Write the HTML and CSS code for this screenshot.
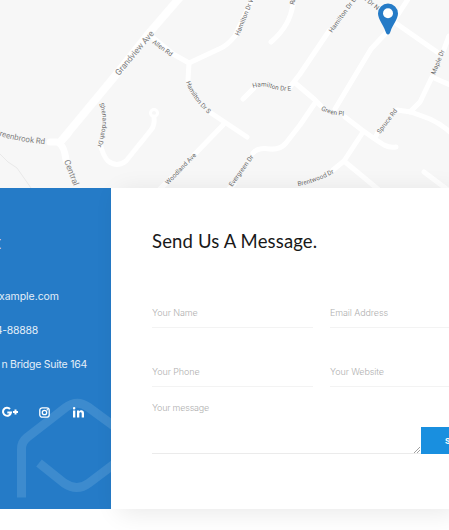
FILE: index.html
```html
<!DOCTYPE html>
<html lang="en">
<head>
<meta charset="utf-8">
<title>Contact</title>
<link rel="stylesheet" href="styles.css">
</head>
<body>
<svg class="map" viewBox="0 0 449 188" width="449" height="188">
  <defs>
    <path id="shen" d="M99 104Q107 119 97 147"/>
    <path id="green" d="M-6 134Q15 142 54 145"/>
    <path id="hams" d="M186 82Q192 100 212 117"/>
    <path id="hame" d="M253 88Q262 85 271 88Q280 92 296 90"/>
    <path id="gpl" d="M321 110Q332 116 350 116"/>
    <path id="brent" d="M298 186Q316 183 338 171"/>
  </defs>
  <path class="trail" d="M0 154L8 162L17 168L31 188"/>
  <g class="road">
    <path class="major" d="M182-5L150 32L115 76L62 140"/>
    <path class="mid" d="M50 142H57Q64 144 66 160M60 142L68 134"/>
    <path d="M100 143Q103 156 108 161Q117 168 126 161L151 130Q155 125 154 117"/>
    <circle class="loop" cx="154" cy="113" r="3.500"/>
    <path d="M151 36L173 54L189 63M189 63L219 49Q227 46 235 36L253-3M189 63L188 80M211 113L247 137M223 125L194 155M171 178L158 191"/>
    <path d="M293 4Q290 26 271 42M243 99L254 88M290 87L300 74L329 31M294 82L314 99L321 106M345 117L362 130Q376 140 384 145Q390 148 396 147"/>
    <path d="M315 103L300 125L286 143Q280 150 270 149Q258 147 253 153M234 184L228 190M335 109L371 49L386 33L410-4M397 24L437 52M449 36L443 52M432 77L420 102L410 112M432 77L450 85M397 110L411 112L430 119Q441 124 451 133M376 136L378 132M363 132L344 161L333 170M344 161L379 190M424 172L448 190"/>
  </g>
  <g class="names">
    <text class="big" transform="translate(119 76) rotate(-50)" textLength="55">Grandview Ave</text>
    <text class="big tight"><textPath href="#green">Greenbrook Rd</textPath></text>
    <text class="big" transform="translate(64 161) rotate(69)">Central Ave</text>
    <text><textPath href="#shen">Shenandoah Dr</textPath></text>
    <text transform="translate(152 43) rotate(36)" textLength="23">Allen Rd</text>
    <text transform="translate(239 36) rotate(-68)" textLength="41">Hamilton Dr W</text>
    <text transform="translate(294 5) rotate(-75)">Ridge Rd</text>
    <text><textPath href="#hams">Hamilton Dr S</textPath></text>
    <text><textPath href="#hame">Hamilton Dr E</textPath></text>
    <text transform="translate(168 185) rotate(-46)" textLength="41">Woodland Ave</text>
    <text transform="translate(232 187) rotate(-54)" textLength="37">Evergreen Dr</text>
    <text transform="translate(332 33) rotate(-54)" textLength="41">Hamilton Dr E</text>
    <text transform="translate(344.500 -14.500) rotate(37)" textLength="41">Hamilton Dr N</text>
    <text><textPath href="#gpl">Green Pl</textPath></text>
    <text transform="translate(380 134) rotate(-53)" textLength="29">Spruce Rd</text>
    <text transform="translate(435 75) rotate(-68)" textLength="26">Maple Dr</text>
    <text><textPath href="#brent">Brentwood Dr</textPath></text>
  </g>
  <path class="pin" d="M388 34.500C386.500 34.500 386 33 385.500 31.500C383.500 25 378 19 378 13.500A10 10 0 0 1 398 13.500C398 19 392.500 25 390.500 31.500C390 33 389.500 34.500 388 34.500Z"/>
  <circle class="hole" cx="388" cy="13.300" r="5"/>
</svg>
<main class="contact">
  <aside class="info">
    <svg class="mark" viewBox="0 0 111 124" width="111" height="124"><path d="M21.500 112.500V64Q21.500 57 27 52.500L65 23Q77 14 88 22L126 50M39 78L64 98Q77 107 89 98L126 70"/></svg>
    <h2>Contact</h2>
    <p class="mail">info@example.com</p>
    <p class="phone">444-88888</p>
    <p class="address">n Bridge Suite 164</p>
    <nav class="social">
      <svg viewBox="0 0 16 12" width="16" height="12"><path class="line" d="M8 3A4 4 0 1 0 9 6.500H5.300M11 6H16M13.500 3.500V8.500"/></svg>
      <svg viewBox="0 0 11 11" width="11" height="11"><rect class="thin" x=".8" y=".8" width="9.400" height="9.400" rx="2.500"/><circle class="thin" cx="5.500" cy="5.500" r="2.200"/><circle class="dot" cx="8.300" cy="2.700" r=".8"/></svg>
      <svg viewBox="0 0 11 11" width="11" height="11"><path class="dot" d="M0 3.500H2.300V10.500H0ZM1.150 0A1.250 1.250 0 1 1 1.100 2.500A1.250 1.250 0 0 1 1.150 0ZM4 3.500H6.200V4.500C7.300 2.700 11 2.800 11 6.200V10.500H8.700V6.700C8.700 4.700 6.300 4.800 6.300 6.700V10.500H4Z"/></svg>
    </nav>
  </aside>
  <form class="message">
    <h1>Send Us A Message.</h1>
    <div class="fields">
      <label class="field">Your Name</label>
      <label class="field">Email Address</label>
      <label class="field">Your Phone</label>
      <label class="field">Your Website</label>
    </div>
    <div class="compose">
      <div class="area"><span>Your message</span><svg class="grip" viewBox="0 0 6 6" width="6" height="6"><path d="M0 6L6 0M3 6L6 3"/></svg></div>
      <button type="button">SEND</button>
    </div>
  </form>
</main>
</body>
</html>
```
FILE: styles.css
```css
* { box-sizing: border-box; }
html { overflow: hidden; }
body { margin: 0; width: 449px; height: 530px; overflow: hidden; background: #fff; font-family: Inter, sans-serif; }
.map { display: block; background: #f7f7f7; }
.road { fill: none; stroke: #fff; stroke-width: 5; stroke-linecap: round; stroke-linejoin: round; }
.major { stroke-width: 8; }
.mid { stroke-width: 7; }
.loop { stroke-width: 3; }
.trail { fill: none; stroke: #e9e9e9; stroke-width: 1; }
.names { font: 6.4px Roboto, sans-serif; fill: #666; stroke: #fafafa; stroke-width: 1px; paint-order: stroke; }
.names .big { font-size: 8.5px; fill: #808080; }
.names .tight { font-size: 8.1px; letter-spacing: -.1px; }
.pin { fill: #257bc7; }
.hole { fill: #fff; }
.contact { display: flex; height: 321px; }
.info { position: relative; width: 111px; height: 320.500px; flex: none; overflow: hidden; background: #257bc7; color: #e3eef8; }
.mark { position: absolute; left: 0; bottom: 0; }
.mark path { fill: none; stroke: #3d8bce; stroke-width: 9; stroke-linejoin: round; }
.info h2, .info p { position: relative; display: flex; justify-content: flex-end; margin: 0; white-space: nowrap; }
.info h2 { width: 1px; height: 32px; margin-top: 42px; font: 400 18px/24px "Open Sans", sans-serif; }
.info p { height: 34px; font-size: 10.5px; line-height: 16px; font-weight: 400; }
.info .mail { width: 59px; margin-top: 27px; letter-spacing: -.05px; }
.info .phone { width: 38px; letter-spacing: -.25px; }
.info .address { width: 87px; letter-spacing: -.25px; }
.social { position: relative; display: flex; align-items: center; width: 85px; margin: 15px 0 0 2px; height: 12px; }
.social svg { flex: none; }
.social svg:nth-child(2) { margin-left: 21px; }
.social svg:nth-child(3) { margin-left: 23px; }
.line { fill: none; stroke: #fff; stroke-width: 2; }
.thin { fill: none; stroke: #fff; stroke-width: 1.3; }
.dot { fill: #fff; }
.message { position: relative; flex: 1; min-width: 0; padding: 40px 0 0 41px; background: #fff; box-shadow: 8px 4px 24px rgba(0, 0, 0, .09); }
h1 { height: 27px; margin: 0; color: #191919; font: 400 18.5px/27px Lato, sans-serif; letter-spacing: .15px; white-space: nowrap; }
.fields { display: grid; grid-template-columns: 161px 161px; grid-template-rows: 58px 59px; column-gap: 17px; width: 297px; margin-top: 15px; overflow: hidden; }
.field { display: flex; align-items: flex-end; padding-bottom: 7px; border-bottom: 1px solid #f3f3f3; color: #b0b0b0; font-size: 9px; line-height: 14px; font-weight: 300; letter-spacing: -.1px; }
.compose { display: flex; align-items: flex-end; width: 297px; height: 67px; overflow: hidden; }
.area { position: relative; width: 269px; flex: none; height: 67px; padding-top: 14px; border-bottom: 1px solid #ebebeb; color: #b0b0b0; font-size: 9px; line-height: 14px; font-weight: 300; letter-spacing: -.22px; }
.grip { position: absolute; right: 1px; bottom: 0; }
.grip path { stroke: #888; stroke-width: .8; }
button { width: 81px; flex: none; height: 27px; padding: 0 0 0 24px; border: 0; background: #198fdf; color: #fff; font: 700 8px Inter, sans-serif; text-align: left; }
```
